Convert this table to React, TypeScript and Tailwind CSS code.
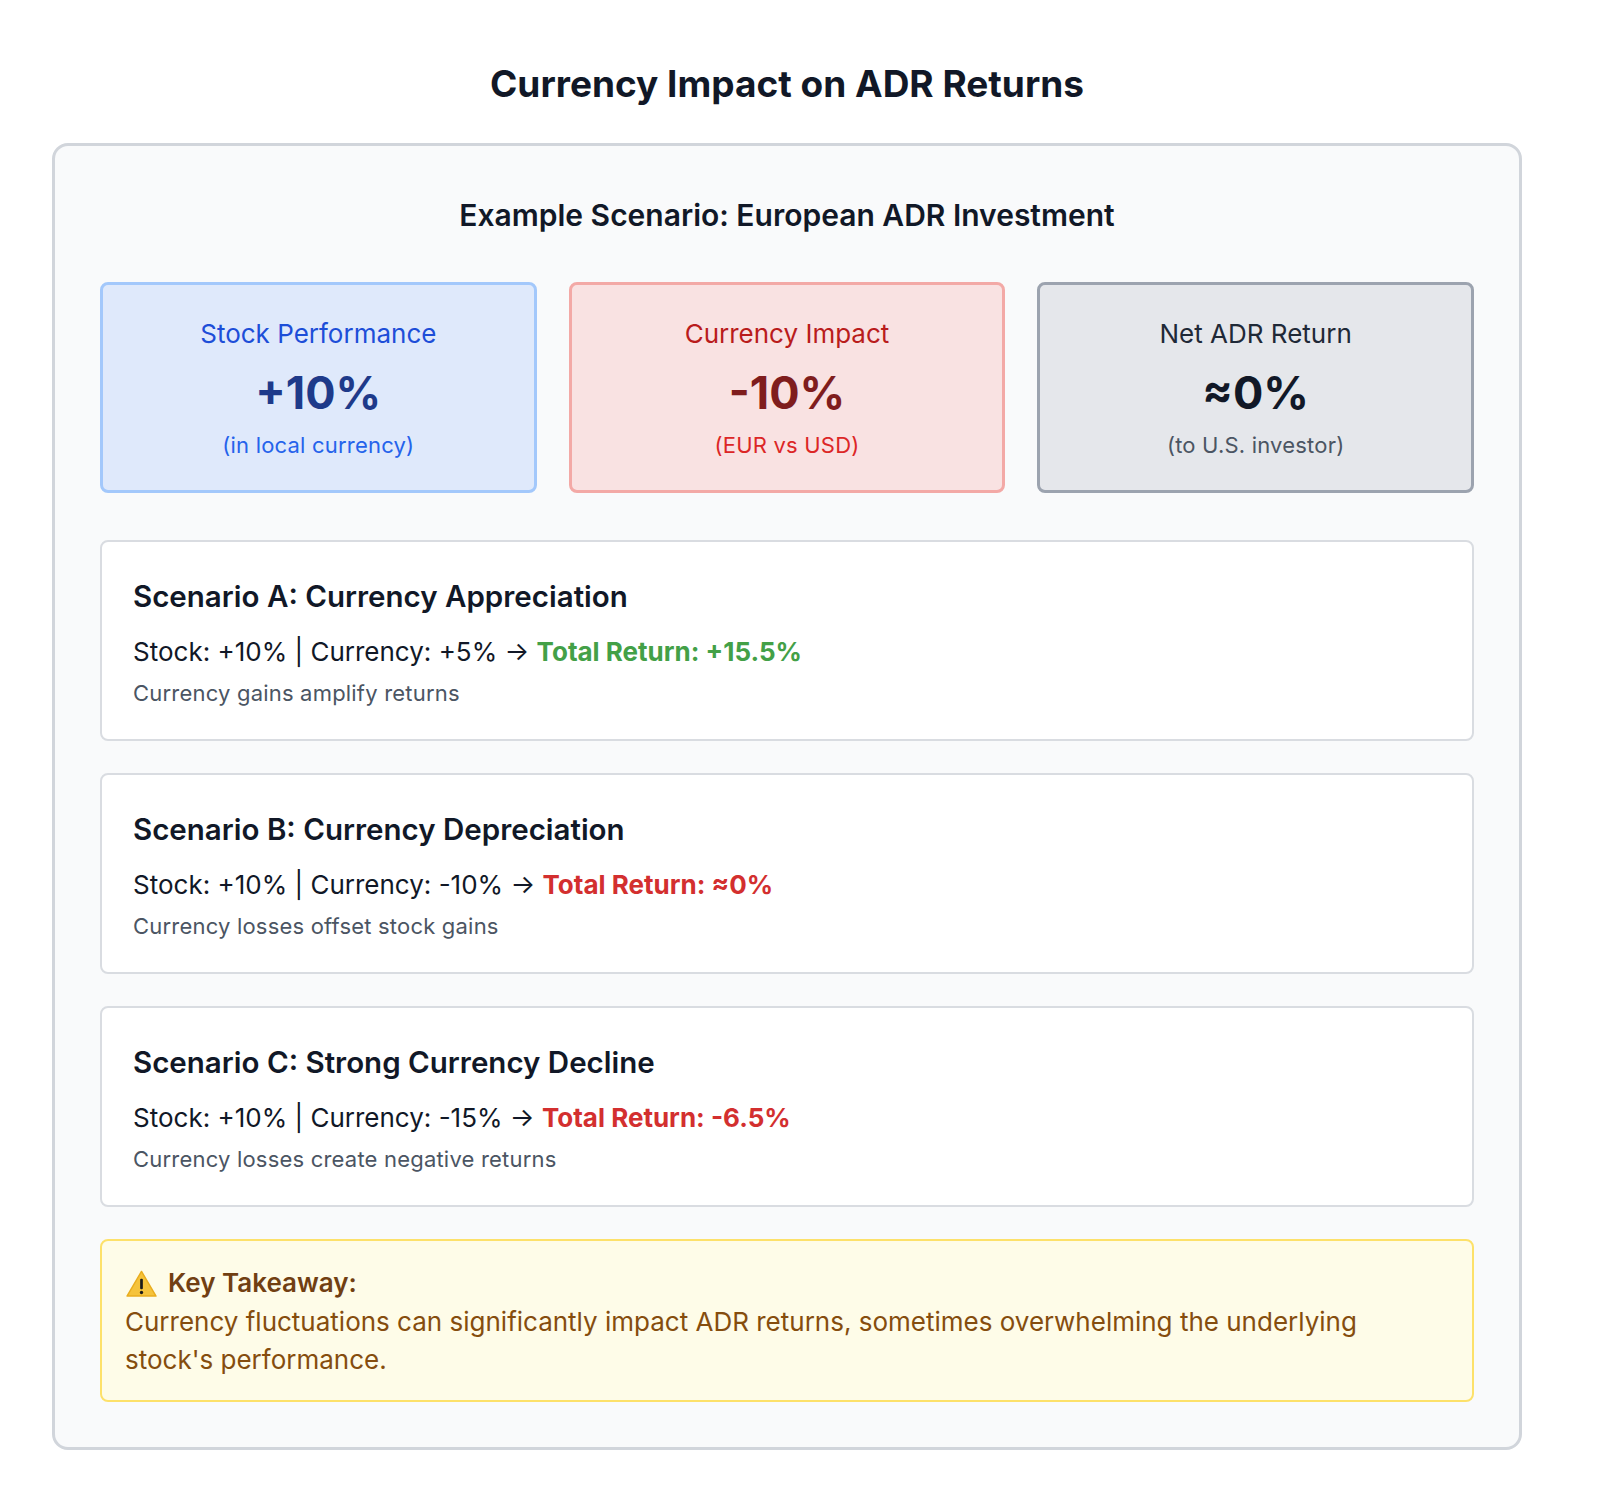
import React from 'react';

type Stat = {
    label: string;
    value: string;
    note: string;
    box: string;
    labelColor: string;
    valueColor: string;
    noteColor: string;
};

const stats: Stat[] = [
    {
        label: 'Stock Performance',
        value: '+10%',
        note: '(in local currency)',
        box: 'bg-[#dfe9fb] border-[#a3c8fb]',
        labelColor: 'text-[#1d4ed8]',
        valueColor: 'text-[#1e3a8a]',
        noteColor: 'text-[#2563eb]',
    },
    {
        label: 'Currency Impact',
        value: '-10%',
        note: '(EUR vs USD)',
        box: 'bg-[#f9e2e2] border-[#f3a9a6]',
        labelColor: 'text-[#b91c1c]',
        valueColor: 'text-[#7f1d1d]',
        noteColor: 'text-[#dc2626]',
    },
    {
        label: 'Net ADR Return',
        value: '≈0%',
        note: '(to U.S. investor)',
        box: 'bg-[#e5e7eb] border-[#9ca3af]',
        labelColor: 'text-[#1f2937]',
        valueColor: 'text-[#111827]',
        noteColor: 'text-[#4b5563]',
    },
];

const scenarios = [
    {
        title: 'Scenario A: Currency Appreciation',
        line: 'Stock: +10% | Currency: +5% → ',
        total: 'Total Return: +15.5%',
        totalColor: 'text-[#43a047]',
        note: 'Currency gains amplify returns',
    },
    {
        title: 'Scenario B: Currency Depreciation',
        line: 'Stock: +10% | Currency: -10% → ',
        total: 'Total Return: ≈0%',
        totalColor: 'text-[#d32f2f]',
        note: 'Currency losses offset stock gains',
    },
    {
        title: 'Scenario C: Strong Currency Decline',
        line: 'Stock: +10% | Currency: -15% → ',
        total: 'Total Return: -6.5%',
        totalColor: 'text-[#d32f2f]',
        note: 'Currency losses create negative returns',
    },
];

function WarningIcon() {
    return (
        <svg width="33" height="29" viewBox="0 0 34 30" className="shrink-0">
            <path d="M17 2.5 L32 28 H2 Z" fill="#f5c33b" stroke="#e9ad1f" strokeWidth="1.5" strokeLinejoin="round" />
            <rect x="15.6" y="10" width="2.8" height="11" rx="1.2" fill="#1a1a1a" />
            <circle cx="17" cy="24.3" r="1.7" fill="#1a1a1a" />
        </svg>
    );
}

export default function App() {
    return (
        <div className="bg-white font-['Inter','Liberation_Sans',sans-serif]">
            <div className="w-[1574px] px-[52px] pt-[62px] pb-[30px]">
                <h1 className="text-center text-[37px] leading-[44px] font-bold text-[#111827] mb-[37px]">
                    Currency Impact on ADR Returns
                </h1>

                <div className="bg-[#f9fafb] border-[3px] border-[#d1d5db] rounded-[16px] px-[45px] pt-[47px] pb-[45px]">
                    <h2 className="text-center text-[30px] leading-[44px] font-semibold text-[#111827] mb-[45px]">
                        Example Scenario: European ADR Investment
                    </h2>

                    <div className="grid grid-cols-3 gap-[32px] mb-[47px]">
                        {stats.map((s) => (
                            <div
                                key={s.label}
                                className={`border-[3px] rounded-[8px] pt-[31px] pb-[30px] text-center ${s.box}`}
                            >
                                <div className={`text-[26px] leading-[36px] ${s.labelColor}`}>{s.label}</div>
                                <div className={`mt-[15px] text-[45px] leading-[52px] font-bold ${s.valueColor}`}>
                                    {s.value}
                                </div>
                                <div className={`mt-[11px] text-[22px] leading-[30px] tracking-[0.2px] ${s.noteColor}`}>
                                    {s.note}
                                </div>
                            </div>
                        ))}
                    </div>

                    <div className="flex flex-col gap-[32px]">
                        {scenarios.map((sc) => (
                            <div
                                key={sc.title}
                                className="bg-white border-2 border-[#d9dce1] rounded-[8px] px-[31px] pt-[34px] pb-[31px]"
                            >
                                <h3 className="text-[29.5px] leading-[40px] font-semibold text-[#111827]">{sc.title}</h3>
                                <p className="mt-[18px] text-[26px] leading-[35px] text-[#111827]">
                                    {sc.line}
                                    <span className={`font-bold ${sc.totalColor}`}>{sc.total}</span>
                                </p>
                                <p className="mt-[10px] text-[22px] leading-[29px] tracking-[0.2px] text-[#4b5563]">
                                    {sc.note}
                                </p>
                            </div>
                        ))}

                        <div className="bg-[#fefce8] border-2 border-[#fde16a] rounded-[8px] px-[23px] pt-[24px] pb-[21px]">
                            <div className="flex items-center gap-[10px]">
                                <WarningIcon />
                                <span className="text-[26px] leading-[36px] font-semibold text-[#713f12]">Key Takeaway:</span>
                            </div>
                            <p className="mt-[2px] text-[26px] leading-[38px] text-[#854d0e]">
                                Currency fluctuations can significantly impact ADR returns, sometimes overwhelming the underlying stock's performance.
                            </p>
                        </div>
                    </div>
                </div>
            </div>
        </div>
    );
}
